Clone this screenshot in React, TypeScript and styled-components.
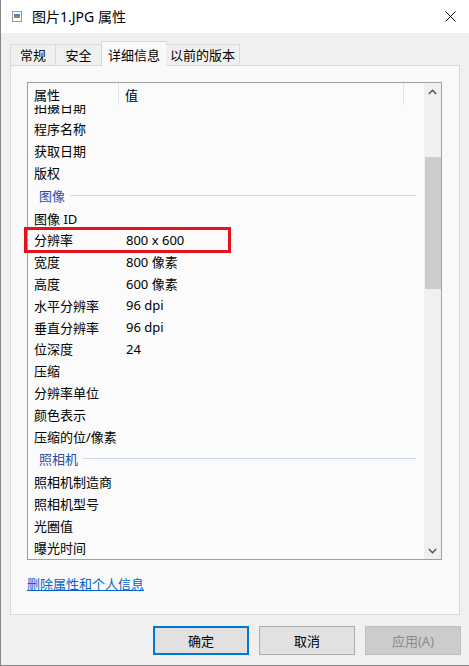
import React from 'react';
import styled, { createGlobalStyle } from 'styled-components';

interface Row {
  name: string;
  value?: string;
  group?: boolean;
}

const rows: Row[] = [
  { name: '拍摄日期' },
  { name: '程序名称' },
  { name: '获取日期' },
  { name: '版权' },
  { name: '图像', group: true },
  { name: '图像 ID' },
  { name: '分辨率', value: '800 x 600' },
  { name: '宽度', value: '800 像素' },
  { name: '高度', value: '600 像素' },
  { name: '水平分辨率', value: '96 dpi' },
  { name: '垂直分辨率', value: '96 dpi' },
  { name: '位深度', value: '24' },
  { name: '压缩' },
  { name: '分辨率单位' },
  { name: '颜色表示' },
  { name: '压缩的位/像素' },
  { name: '照相机', group: true },
  { name: '照相机制造商' },
  { name: '照相机型号' },
  { name: '光圈值' },
  { name: '曝光时间' },
];

const tabs = ['常规', '安全', '详细信息', '以前的版本'];

const App: React.FC = () => {
  return (
    <>
      <GlobalStyle />
      <Window>
        <TitleBar>
          <FileIcon width="10" height="11" viewBox="0 0 10 11">
            <rect x="0.5" y="0.5" width="9" height="10" fill="#fff" stroke="#9a9a9a" />
            <rect x="2" y="3" width="6" height="4" fill="#4a84c4" />
            <rect x="2" y="5" width="6" height="2" fill="#6aa05a" />
          </FileIcon>
          <Title>图片1.JPG 属性</Title>
          <CloseButton>
            <svg width="11" height="11" viewBox="0 0 11 11">
              <path d="M0.5 0.5 L10.5 10.5 M10.5 0.5 L0.5 10.5" stroke="#111" strokeWidth="1" />
            </svg>
          </CloseButton>
        </TitleBar>

        <Body>
          <TabStrip>
            {tabs.map((t, i) => (
              <Tab key={t} active={i === 2} first={i === 0}>
                {t}
              </Tab>
            ))}
          </TabStrip>

          <Panel>
            <ListBox>
              <ListMain>
                <Header>
                  <HeaderCell width={91}>属性</HeaderCell>
                  <HeaderCell width={285}>值</HeaderCell>
                </Header>
                <Rows>
                  {rows.map((r) =>
                    r.group ? (
                      <GroupRow key={r.name}>
                        <GroupLabel>{r.name}</GroupLabel>
                        <GroupLine />
                      </GroupRow>
                    ) : (
                      <ItemRow key={r.name}>
                        <NameCell>{r.name}</NameCell>
                        <ValueCell>{r.value}</ValueCell>
                      </ItemRow>
                    )
                  )}
                </Rows>
              </ListMain>
              <ScrollBar>
                <ArrowButton>
                  <svg width="9" height="6" viewBox="0 0 9 6">
                    <path d="M0.8 5 L4.5 1.3 L8.2 5" fill="none" stroke="#505050" strokeWidth="1.4" />
                  </svg>
                </ArrowButton>
                <Track>
                  <Thumb style={{ marginTop: 57, height: 132 }} />
                </Track>
                <ArrowButton>
                  <svg width="9" height="6" viewBox="0 0 9 6">
                    <path d="M0.8 1 L4.5 4.7 L8.2 1" fill="none" stroke="#505050" strokeWidth="1.4" />
                  </svg>
                </ArrowButton>
              </ScrollBar>
              <Marker />
            </ListBox>
            <RemoveLink href="#">删除属性和个人信息</RemoveLink>
          </Panel>

          <ButtonRow>
            <DialogButton primary>确定</DialogButton>
            <DialogButton>取消</DialogButton>
            <DialogButton disabled>应用(A)</DialogButton>
          </ButtonRow>
        </Body>
      </Window>
    </>
  );
};

const GlobalStyle = createGlobalStyle`
  html, body {
    margin: 0;
    padding: 0;
    background: #ffffff;
  }
  body {
    font-family: "Noto Sans", "Noto Sans CJK SC", sans-serif;
    font-size: 13px;
    color: #000;
  }
  * {
    box-sizing: border-box;
  }
`;

const Window = styled.div`
  width: 469px;
  height: 666px;
  display: flex;
  flex-direction: column;
  background: #f0f0f0;
  border-left: 1px solid #858585;
  border-bottom: 1px solid #858585;
`;

const TitleBar = styled.div`
  height: 33px;
  display: flex;
  align-items: center;
  background: #ffffff;
  padding-left: 11px;
`;

const FileIcon = styled.svg`
  flex: none;
`;

const Title = styled.div`
  margin-left: 10px;
  font-size: 14px;
  flex: 1;
  line-height: 20px;
`;

const CloseButton = styled.div`
  width: 38px;
  height: 33px;
  display: flex;
  align-items: center;
  justify-content: center;
`;

const Body = styled.div`
  flex: 1;
  display: flex;
  flex-direction: column;
  padding: 9px 8px 0 9px;
`;

const TabStrip = styled.div`
  height: 24px;
  display: flex;
  align-items: flex-end;
  position: relative;
  z-index: 1;
`;

const Tab = styled.div<{ active?: boolean; first?: boolean }>`
  height: ${(p) => (p.active ? '25px' : '22px')};
  min-width: ${(p) => (p.active ? '65px' : '46px')};
  padding: ${(p) => (p.active ? '2px 6px 0 6px' : '0 4px')};
  margin-left: ${(p) => (p.active ? '-1px' : '0')};
  margin-right: ${(p) => (p.active ? '-1px' : '0')};
  display: flex;
  align-items: center;
  justify-content: center;
  background: ${(p) => (p.active ? '#f9f9f9' : '#f0f0f0')};
  border-top: 1px solid #d9d9d9;
  border-right: 1px solid #d9d9d9;
  border-bottom: ${(p) => (p.active ? 'none' : '1px solid #d9d9d9')};
  border-left: ${(p) => (p.first || p.active ? '1px solid #d9d9d9' : 'none')};
  font-size: 13px;
  line-height: 18px;
`;

const Panel = styled.div`
  width: 450px;
  height: 550px;
  margin-top: -1px;
  background: #f9f9f9;
  border: 1px solid #d9d9d9;
  padding: 16px 17px 0 16px;
  display: flex;
  flex-direction: column;
`;

const ListBox = styled.div`
  position: relative;
  height: 478px;
  display: flex;
  border: 1px solid #a0a0a0;
  background: #fbfbfb;
`;

const ListMain = styled.div`
  flex: 1;
  min-width: 0;
  display: flex;
  flex-direction: column;
`;

const Header = styled.div`
  height: 22px;
  display: flex;
  flex: none;
  background: #fbfbfb;
  position: relative;
  z-index: 1;
`;

const HeaderCell = styled.div<{ width: number }>`
  width: ${(p) => p.width}px;
  padding-left: 6px;
  border-right: 1px solid #e5e5e5;
  display: flex;
  align-items: center;
  font-size: 13px;
`;

const Rows = styled.div`
  flex: 1;
  overflow: hidden;
  & > :first-child {
    margin-top: -9px;
  }
`;

const ItemRow = styled.div`
  height: 21.8px;
  display: flex;
  align-items: center;
  font-size: 13px;
  white-space: nowrap;
`;

const NameCell = styled.div`
  width: 92px;
  padding-left: 6px;
`;

const ValueCell = styled.div`
  padding-left: 6px;
`;

const GroupRow = styled.div`
  height: 24px;
  display: flex;
  align-items: center;
  padding-left: 11px;
  padding-right: 8px;
`;

const GroupLabel = styled.div`
  color: #2a4ea6;
  font-size: 13px;
  margin-right: 5px;
`;

const GroupLine = styled.div`
  flex: 1;
  height: 1px;
  background: #c9d8ee;
`;

const ScrollBar = styled.div`
  width: 17px;
  display: flex;
  flex-direction: column;
  background: #f0f0f0;
`;

const ArrowButton = styled.div`
  height: 17px;
  flex: none;
  display: flex;
  align-items: center;
  justify-content: center;
`;

const Track = styled.div`
  flex: 1;
  display: flex;
  flex-direction: column;
  align-items: center;
`;

const Thumb = styled.div`
  width: 16px;
  background: #cdcdcd;
`;

const Marker = styled.div`
  position: absolute;
  left: -4px;
  top: 144px;
  width: 207px;
  height: 26px;
  border: 3px solid #e8101a;
  pointer-events: none;
`;

const RemoveLink = styled.a`
  margin-top: 15px;
  align-self: flex-start;
  color: #0066cc;
  font-size: 13px;
  line-height: 18px;
  text-decoration: underline;
`;

const ButtonRow = styled.div`
  display: flex;
  justify-content: flex-end;
  gap: 10px;
  margin-top: 11px;
`;

const DialogButton = styled.button<{ primary?: boolean }>`
  width: 96px;
  height: 29px;
  font-family: "Noto Sans", "Noto Sans CJK SC", sans-serif;
  font-size: 13px;
  color: ${(p) => (p.disabled ? '#8a8a8a' : '#000')};
  background: ${(p) => (p.disabled ? '#cccccc' : '#e1e1e1')};
  border: ${(p) =>
    p.primary ? '2px solid #0078d7' : p.disabled ? '1px solid #bfbfbf' : '1px solid #adadad'};
  padding: 0;
`;

export default App;
